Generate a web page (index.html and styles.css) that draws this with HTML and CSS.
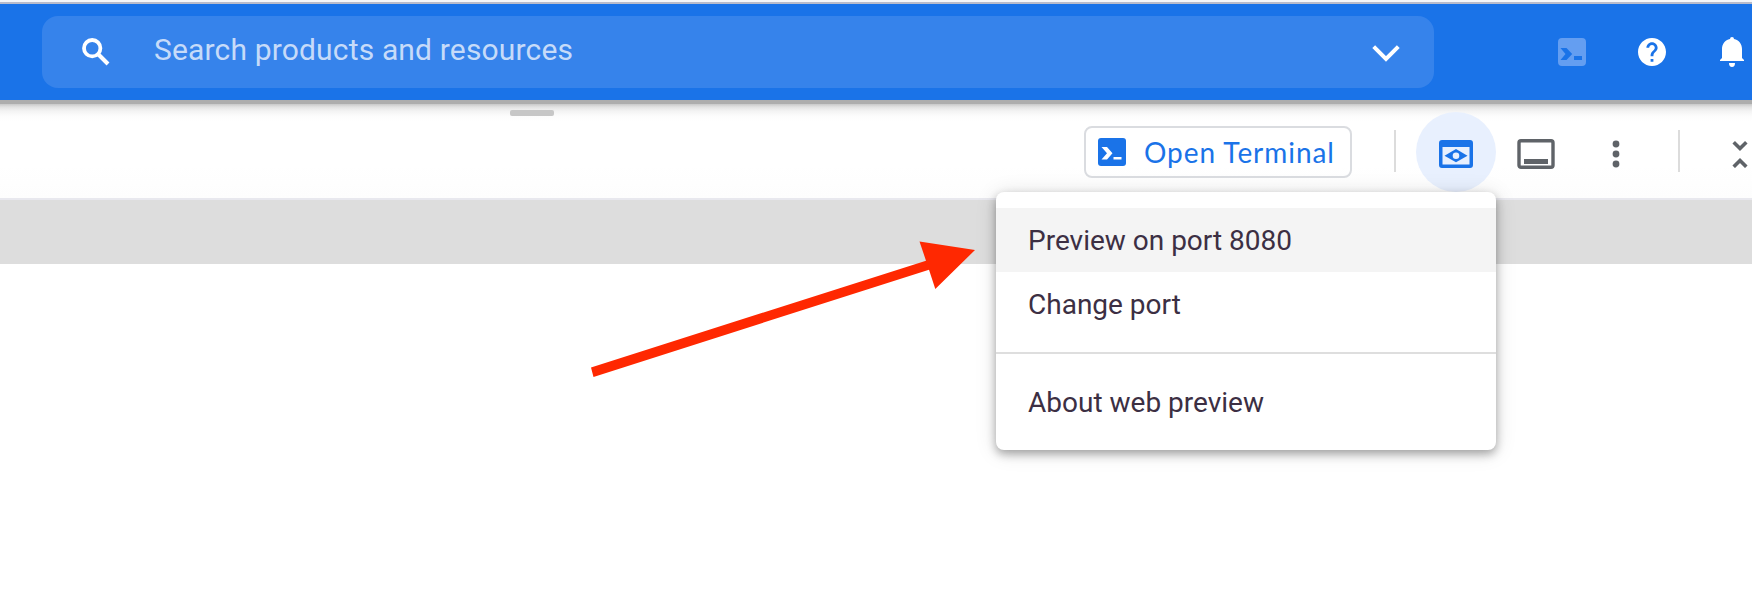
FILE: index.html
```html
<!DOCTYPE html>
<html lang="en">
<head>
<meta charset="utf-8">
<title>Cloud Shell</title>
<link rel="stylesheet" href="styles.css">
</head>
<body>
<header class="header">
  <div class="search">
    <svg class="search-icon" viewBox="0 0 28 28"><circle cx="10.2" cy="10.2" r="8.2" fill="none" stroke="#fff" stroke-width="3.8"/><path d="M16 16l10 10" stroke="#fff" stroke-width="4"/></svg>
    <span class="placeholder">Search products and resources</span>
    <svg class="chevron" viewBox="0 0 28 18"><path d="M1.7 1.7L14 14 26.3 1.7" fill="none" stroke="#fff" stroke-width="4"/></svg>
  </div>
  <nav class="header-icons">
    <svg class="shell" viewBox="0 0 28 28"><path fill="#649ef1" fill-rule="evenodd" d="M4 0h20a4 4 0 0 1 4 4v20a4 4 0 0 1-4 4H4a4 4 0 0 1-4-4V4a4 4 0 0 1 4-4zM2.500 10H8.500l5.700 6-5.700 6H2.500l5-6zM16 18h8v4h-8z"/></svg>
    <svg class="help" viewBox="2 2 20 20"><path fill="#fff" d="M12 2C6.48 2 2 6.48 2 12s4.480 10 10 10 10-4.480 10-10S17.520 2 12 2zm1 17h-2v-2h2v2zm2.070-7.750l-.9.920C13.450 12.900 13 13.500 13 15h-2v-.5c0-1.100.45-2.100 1.170-2.830l1.240-1.260c.37-.36.59-.86.59-1.410 0-1.100-.9-2-2-2s-2 .9-2 2H8c0-2.210 1.790-4 4-4s4 1.790 4 4c0 .88-.36 1.680-.93 2.250z"/></svg>
    <svg class="bell" viewBox="0 0 24 30"><path fill="#fff" d="M12 0a2 2 0 0 1 2 2c5 1 8 5 8 10v9l2 2v1H0v-1l2-2v-9C2 7 5 3 10 2a2 2 0 0 1 2-2zM9 26h6a3 4 0 0 1-6 0z"/></svg>
  </nav>
</header>
<main>
  <section class="toolbar">
    <div class="handle"></div>
    <div class="open">
      <svg class="open-icon" viewBox="0 0 28 28"><rect width="28" height="28" rx="3" fill="#1a73e8"/><path fill="#fff" d="M3.500 9H9l5.500 6.200L9 21.500H3.500L9 15.200zM15.500 19h8v2.500h-8z"/></svg>
      <span>Open Terminal</span>
    </div>
    <div class="rule rule-a"></div>
    <div class="circle"><svg class="preview" viewBox="0 0 34 28"><path fill="#1a73e8" fill-rule="evenodd" d="M3 0h28a3 3 0 0 1 3 3v22a3 3 0 0 1-3 3H3a3 3 0 0 1-3-3V3a3 3 0 0 1 3-3zM3.500 7v17.500h27V7z"/><path fill="#1a73e8" d="M5.500 15.700L17 9l11.500 6.700L17 22.300z"/><circle cx="17" cy="15.700" r="3.300" fill="#e8f0fe"/></svg></div>
    <svg class="panel" viewBox="0 0 38 30"><rect x="2" y="1.700" width="34" height="26.600" rx="2" fill="none" stroke="#5f6368" stroke-width="3.400"/><path fill="#5f6368" d="M7 20h24v5H7z"/></svg>
    <svg class="dots" viewBox="0 0 8 28"><g fill="#5f6368"><circle cx="4" cy="4" r="3.400"/><circle cx="4" cy="14" r="3.400"/><circle cx="4" cy="24" r="3.400"/></g></svg>
    <div class="rule rule-b"></div>
    <svg class="collapse" viewBox="0 0 16 28"><path fill="none" stroke="#5f6368" stroke-width="3.600" d="M1.700 2.200L8 8.500l6.300-6.300M1.700 26.800L8 20.500l6.300 6.300"/></svg>
  </section>
  <div class="band"></div>
</main>
<div class="menu">
  <div class="item active">Preview on port 8080</div>
  <div class="item">Change port</div>
  <div class="separator"></div>
  <div class="item">About web preview</div>
</div>
<svg class="arrow" viewBox="0 0 385 137"><path fill="#ff2801" d="M1 127.500L336 20.700 329.500 1.500 385 10 345.300 49 339 29.700 3.500 137z"/></svg>
</body>
</html>
```
FILE: styles.css
```css
* { box-sizing: border-box; }
body { margin: 0; height: 590px; overflow: hidden; background: #fff; font-family: Roboto, sans-serif; position: relative; border-top: 2px solid #f5f6f8; }
svg { display: block; flex: none; }
.header { height: 102px; background: #1a73e8; border-top: 2px solid #b9bccb; border-bottom: 4px solid #adadad; display: flex; align-items: center; padding-left: 42px; }
.search { width: 1392px; height: 72px; border-radius: 16px; background: #3683eb; display: flex; align-items: center; padding: 0 34px 0 40px; }
.search-icon { width: 28px; height: 28px; }
.placeholder { flex: 1; margin-left: 44px; padding-bottom: 4px; color: #c6dbf9; font-size: 30px; line-height: 36px; letter-spacing: .16px; white-space: nowrap; }
.chevron { width: 28px; height: 18px; margin-top: 3px; }
.header-icons { display: flex; align-items: center; margin-left: 124px; }
.shell, .help { width: 28px; height: 28px; }
.help { margin-left: 52px; }
.bell { width: 24px; height: 30px; margin-left: 54px; }
.toolbar { height: 96px; border-bottom: 2px solid #e8e8ee; display: flex; align-items: center; background: linear-gradient(#c8c8c8 0, #e2e2e2 3px, #f3f3f3 7px, #fcfcfc 12px, #fff 18px, #fff 65%, #fdfdfd); }
.handle { width: 44px; height: 6px; border-radius: 2px; background: #c7c7c7; margin-left: 510px; align-self: flex-start; margin-top: 6px; }
.open { width: 268px; height: 52px; margin-left: 530px; margin-top: 2px; border: 2px solid #dadce0; border-radius: 8px; display: flex; align-items: center; padding-left: 12px; color: #1a73e8; font: 28px/36px Lato, sans-serif; letter-spacing: .95px; white-space: nowrap; }
.open-icon { width: 28px; height: 28px; }
.open span { margin-left: 18px; padding-bottom: 1px; }
.rule { width: 2px; height: 42px; background: #dcdcdc; }
.rule-a { margin-left: 42px; }
.circle { width: 80px; height: 80px; border-radius: 50%; background: #e8f0fe; margin: 2px 0 0 20px; display: flex; align-items: center; justify-content: center; }
.preview { width: 34px; height: 28px; margin-top: 4px; }
.panel { width: 38px; height: 30px; margin: 5px 0 0 21px; }
.dots { width: 8px; height: 28px; margin: 5px 0 0 57px; }
.rule-b { margin-left: 58px; }
.collapse { width: 16px; height: 28px; margin: 5px 0 0 52px; }
.band { height: 64px; background: #ddd; }
.menu { position: absolute; left: 996px; top: 190px; width: 500px; height: 258px; padding: 16px 0; background: #fff; border-radius: 8px; box-shadow: 0 4px 10px rgba(0,0,0,.32), 0 2px 22px rgba(0,0,0,.12); overflow: hidden; }
.item { height: 64px; line-height: 62px; padding: 2px 0 0 32px; color: #3c2f43; font-size: 28px; white-space: nowrap; }
.active { background: #f4f4f4; }
.separator { height: 2px; margin: 16px 0; background: #dedede; }
.arrow { position: absolute; left: 590px; top: 238px; width: 385px; height: 137px; }
```
